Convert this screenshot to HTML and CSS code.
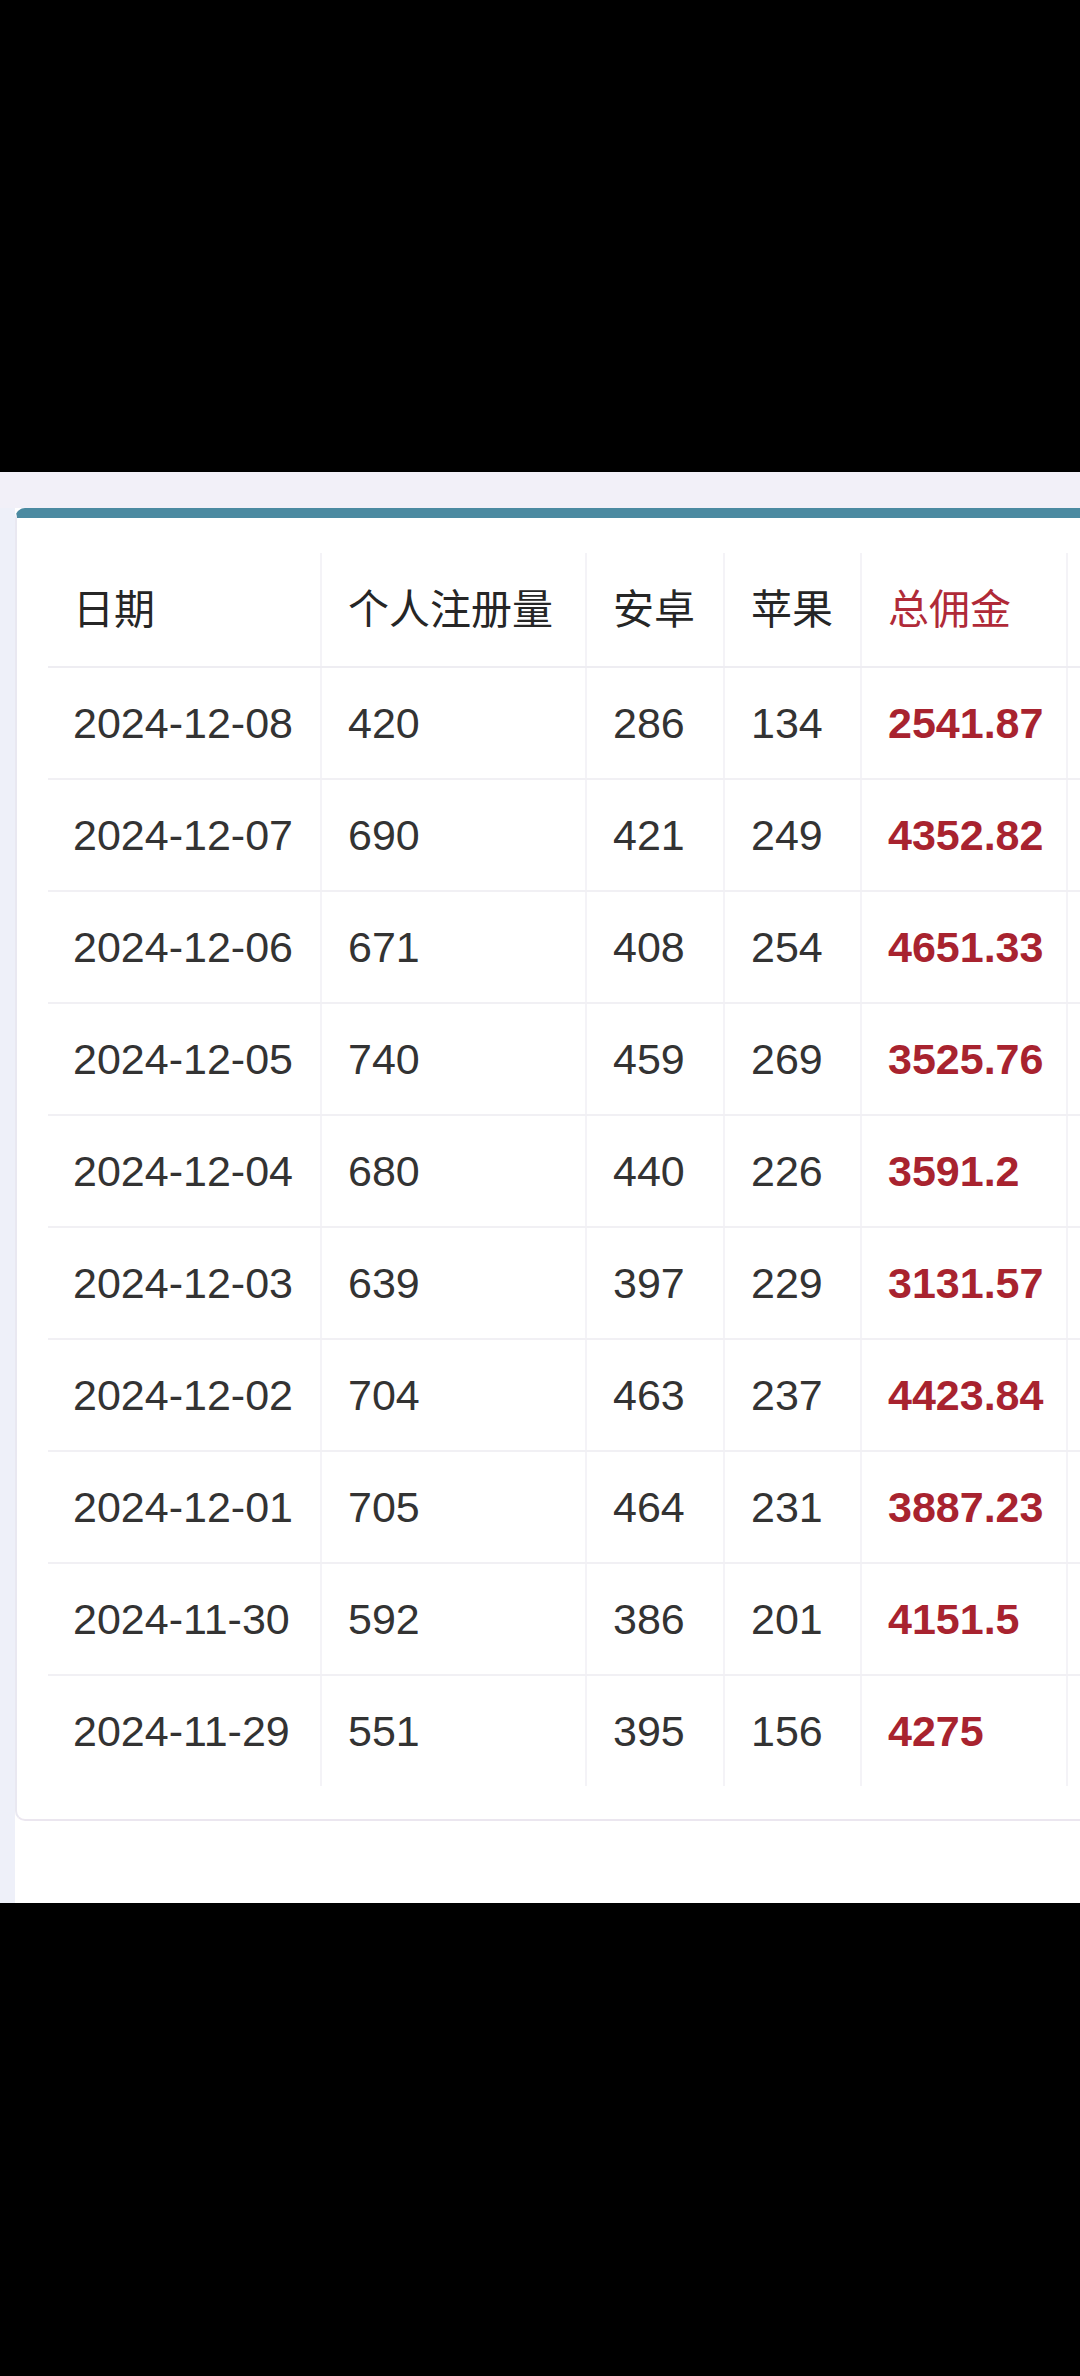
FILE: index.html
```html
<!DOCTYPE html>
<html lang="zh-CN">
<head>
<meta charset="utf-8">
<title>佣金统计</title>
<link rel="stylesheet" href="styles.css">
</head>
<body>
<div class="black-top"></div>
<div class="screen">
  <div class="screen-top"></div>
  <div class="screen-body">
    <div class="side-strip"></div>
    <div class="content">
      <div class="card">
        <table class="stats">
          <colgroup>
            <col class="c-date"><col class="c-reg"><col class="c-and"><col class="c-ios"><col class="c-total"><col class="c-extra">
          </colgroup>
          <thead>
            <tr>
              <th>日期</th><th>个人注册量</th><th>安卓</th><th>苹果</th><th class="red">总佣金</th><th></th>
            </tr>
          </thead>
          <tbody>
            <tr><td>2024-12-08</td><td>420</td><td>286</td><td>134</td><td class="money">2541.87</td><td></td></tr>
            <tr><td>2024-12-07</td><td>690</td><td>421</td><td>249</td><td class="money">4352.82</td><td></td></tr>
            <tr><td>2024-12-06</td><td>671</td><td>408</td><td>254</td><td class="money">4651.33</td><td></td></tr>
            <tr><td>2024-12-05</td><td>740</td><td>459</td><td>269</td><td class="money">3525.76</td><td></td></tr>
            <tr><td>2024-12-04</td><td>680</td><td>440</td><td>226</td><td class="money">3591.2</td><td></td></tr>
            <tr><td>2024-12-03</td><td>639</td><td>397</td><td>229</td><td class="money">3131.57</td><td></td></tr>
            <tr><td>2024-12-02</td><td>704</td><td>463</td><td>237</td><td class="money">4423.84</td><td></td></tr>
            <tr><td>2024-12-01</td><td>705</td><td>464</td><td>231</td><td class="money">3887.23</td><td></td></tr>
            <tr><td>2024-11-30</td><td>592</td><td>386</td><td>201</td><td class="money">4151.5</td><td></td></tr>
            <tr><td>2024-11-29</td><td>551</td><td>395</td><td>156</td><td class="money">4275</td><td></td></tr>
          </tbody>
        </table>
      </div>
    </div>
  </div>
</div>
<div class="black-bottom"></div>
</body>
</html>
```
FILE: styles.css
```css
html, body {
  margin: 0;
  padding: 0;
  background: #000;
  font-family: "Liberation Sans", Arial, "Noto Sans CJK SC", sans-serif;
  color: #333;
}
.black-top { height: 472px; background: #000; }
.black-bottom { height: 473px; background: #000; }
.screen {
  height: 1431px;
  background: #fff;
  overflow: hidden;
  display: flex;
  flex-direction: column;
}
.screen-top {
  height: 36px;
  flex: none;
  background: #f2f0f8;
}
.screen-body {
  flex: 1;
  display: flex;
}
.side-strip {
  width: 15px;
  flex: none;
  background: #eef0f9;
}
.content {
  flex: 1;
  min-width: 0;
  overflow: hidden;
}
.card {
  width: 1200px;
  box-sizing: border-box;
  height: 1313px;
  background: #fff;
  border-top: 10px solid #4b8aa1;
  border-left: 2px solid #e9e8f1;
  border-bottom: 2px solid #ebe6ef;
  border-radius: 10px 0 0 10px;
  padding: 35px 0 0 31px;
}
.stats {
  border-collapse: collapse;
  table-layout: fixed;
  width: 1150px;
}
.c-date { width: 273px; }
.c-reg { width: 265px; }
.c-and { width: 138px; }
.c-ios { width: 137px; }
.c-total { width: 206px; }
.c-extra { width: 131px; }
.stats th, .stats td {
  text-align: left;
  padding: 0 0 0 26px;
  border-left: 2px solid #f4f3f7;
  white-space: nowrap;
}
.stats th:first-child, .stats td:first-child {
  border-left: none;
  padding-left: 25px;
}
.stats th {
  height: 106px;
  font-family: "Noto Sans CJK SC", sans-serif;
  font-weight: 400;
  font-size: 41px;
  color: #262626;
  border-bottom: 2px solid #eeedf2;
  padding-bottom: 7px;
}
.stats td {
  height: 110px;
  font-size: 43px;
  color: #333;
  border-bottom: 2px solid #f1f0f4;
}
.stats tbody tr:last-child td { border-bottom: none; }
.stats .red { color: #b02a38; }
.stats .money {
  color: #a8232f;
  font-weight: bold;
}
```
